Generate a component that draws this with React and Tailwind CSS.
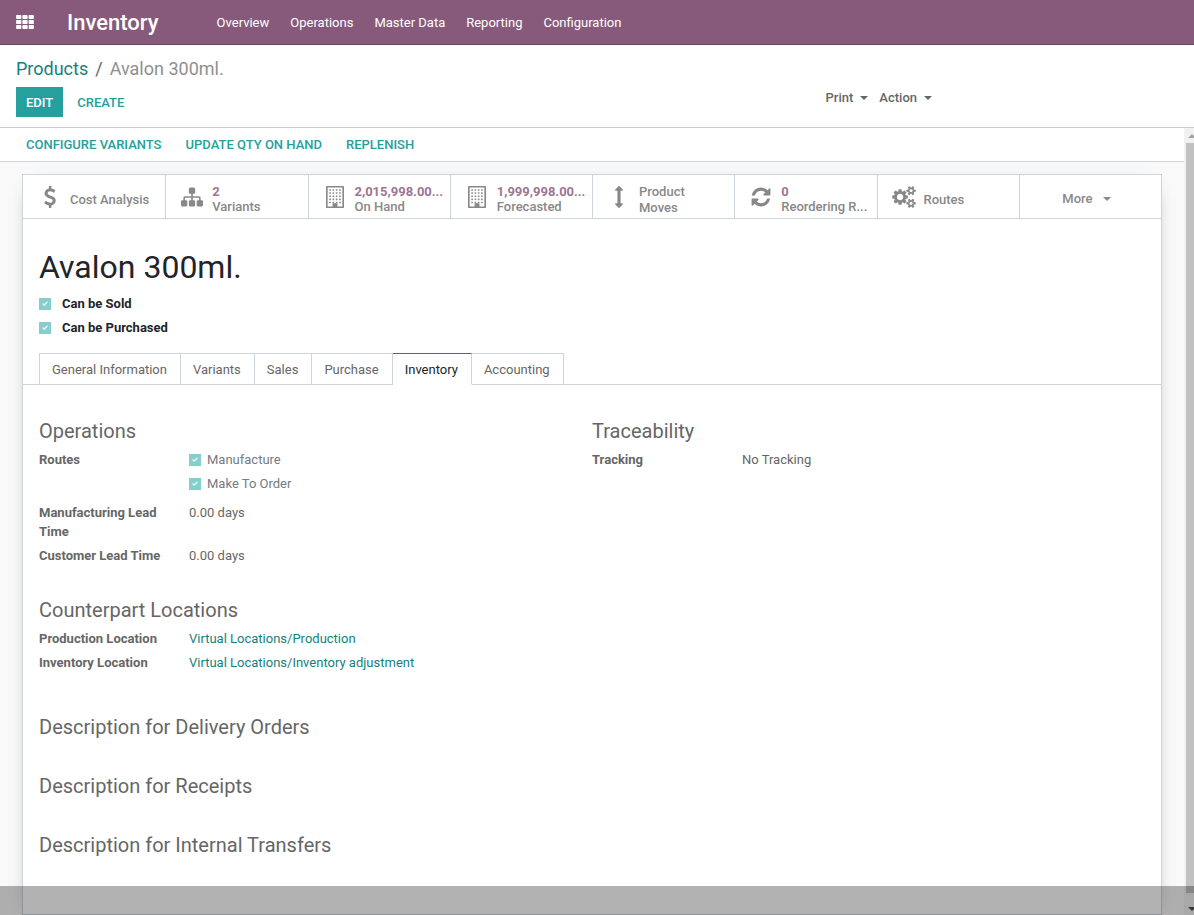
import React from "react";

const PATHS = {
  dollar:
    "M1362 1185q0 153-99.5 263.5t-258.5 136.5v175q0 14-9 23t-23 9h-135q-13 0-22.5-9.5t-9.5-22.5v-175q-66-9-127.5-31t-101.5-44.5-74-48-46.5-37.5-17.5-18q-17-21-2-41l103-135q7-10 23-12 15-2 24 9l2 2q113 99 243 125 37 8 74 8 81 0 142.5-43t61.5-122q0-28-15-53t-33.5-42-58.5-37.5-66-32-80-32.5q-39-16-61.5-25t-61.5-26.5-62.5-31-56.5-35.5-53.5-42.5-43.5-49-35.5-58-21-66.5-8.5-78q0-138 98-242t255-134v-180q0-13 9.5-22.5t22.5-9.5h135q14 0 23 9t9 23v176q57 6 110.5 23t87 33.5 63.5 37.5 39 29 15 14q17 18 5 38l-81 146q-8 15-23 16-14 3-27-7-3-3-14.5-12t-39-26.5-58.5-32-74.5-26-85.5-11.5q-95 0-155 43t-60 111q0 26 8.5 48t29.5 41.5 39.5 33 56 31 60.5 27 70 27.5q53 20 81 31.5t76 35 75.5 42.5 62 50 53 63.5 31.5 76.5 13 94z",
  sitemap:
    "M1792 1248v320q0 40-28 68t-68 28h-320q-40 0-68-28t-28-68v-320q0-40 28-68t68-28h96v-192h-512v192h96q40 0 68 28t28 68v320q0 40-28 68t-68 28h-320q-40 0-68-28t-28-68v-320q0-40 28-68t68-28h96v-192h-512v192h96q40 0 68 28t28 68v320q0 40-28 68t-68 28h-320q-40 0-68-28t-28-68v-320q0-40 28-68t68-28h96v-192q0-52 38-90t90-38h512v-192h-96q-40 0-68-28t-28-68v-320q0-40 28-68t68-28h320q40 0 68 28t28 68v320q0 40-28 68t-68 28h-96v192h512q52 0 90 38t38 90v192h96q40 0 68 28t28 68z",
  arrows:
    "M1216 320q0 26-19 45t-45 19h-128v1024h128q26 0 45 19t19 45-19 45l-256 256q-19 19-45 19t-45-19l-256-256q-19-19-19-45t19-45 45-19h128v-1024h-128q-26 0-45-19t-19-45 19-45l256-256q19-19 45-19t45 19l256 256q19 19 19 45z",
  refresh:
    "M1639 1056q0 5-1 7-64 268-268 434.5t-478 166.5q-146 0-282.5-55t-243.5-157l-129 129q-19 19-45 19t-45-19-19-45v-448q0-26 19-45t45-19h448q26 0 45 19t19 45-19 45l-137 137q71 66 161 102t187 36q134 0 250-65t186-179q11-17 53-117 8-23 30-23h192q13 0 22.5 9.5t9.5 22.5zm25-800v448q0 26-19 45t-45 19h-448q-26 0-45-19t-19-45 19-45l138-138q-148-137-349-137-134 0-250 65t-186 179q-11 17-53 117-8 23-30 23h-199q-13 0-22.5-9.5t-9.5-22.5v-7q65-268 270-434.5t480-166.5q146 0 284 55.5t245 156.5l130-129q19-19 45-19t45 19 19 45z",
  bigCog:
    "M832 896q0-106-75-181t-181-75-181 75-75 181 75 181 181 75 181-75 75-181zM1216 805v185q0 10-7 19.5t-16 10.5l-155 24q-11 35-32 76 34 48 90 115 7 11 7 20 0 12-7 19-23 30-82.5 89.5t-78.5 59.5q-11 0-21-7l-115-90q-37 19-77 31-11 108-23 155-7 24-30 24h-186q-11 0-20-7.5t-10-17.5l-23-153q-34-10-75-31l-118 89q-7 7-20 7-11 0-21-8-144-133-144-160 0-9 7-19 10-14 41-53t47-61q-23-44-35-82l-152-24q-10-1-17-9.5t-7-19.5v-185q0-10 7-19.5t16-10.5l155-24q11-35 32-76-34-48-90-115-7-11-7-20 0-12 7-20 22-30 82-89t79-59q11 0 21 7l115 90q34-18 77-32 11-108 23-154 7-24 30-24h186q11 0 20 7.5t10 17.5l23 153q34 10 75 31l118-89q8-7 20-7 11 0 21 8 144 133 144 160 0 8-7 19-12 16-42 54t-45 60q23 48 34 82l152 23q10 2 17 10.5t7 19.5z",
  smallCog:
    "M1600 1408q0-52-38-90t-90-38-90 38-38 90q0 53 37.5 90.5t90.5 37.5 90.5-37.5 37.5-90.5zM1856 1338v140q0 16-149 31-12 27-30 52 51 113 51 138 0 4-4 7-122 71-124 71-8 0-46-47t-52-68q-20 2-30 2t-30-2q-14 21-52 68t-46 47q-2 0-124-71-4-3-4-7 0-25 51-138-18-25-30-52-149-15-149-31v-140q0-16 149-31 13-29 30-52-51-113-51-138 0-4 4-7 4-2 35-20t59-34 30-16q8 0 46 46.5t52 67.5q20-2 30-2t30 2q51-71 92-112l6-2q4 0 124 70 4 3 4 7 0 25-51 138 17 23 30 52 149 15 149 31z",
};

function Glyph({ name }) {
  return (
    <svg viewBox="0 0 1792 1792" className="size-[22px] fill-current" aria-hidden="true">
      <path d={PATHS[name]} />
    </svg>
  );
}

function Cogs() {
  return (
    <svg viewBox="-64 0 1920 1792" className="h-[22px] w-6 fill-current" fillRule="evenodd" aria-hidden="true">
      <path d={PATHS.bigCog} />
      <path d={PATHS.smallCog} />
      <path d={PATHS.smallCog} transform="translate(0 -1024)" />
    </svg>
  );
}

function Building() {
  const cells = [];
  for (let r = 0; r < 5; r++) {
    for (let c = 0; c < 4; c++) {
      cells.push(<rect key={`${r}-${c}`} x={256 + c * 256} y={256 + r * 256} width="128" height="128" rx="24" />);
    }
  }
  return (
    <svg viewBox="0 0 1408 1792" className="h-[22px] w-[18px] fill-current" preserveAspectRatio="none" aria-hidden="true">
      <path
        fillRule="evenodd"
        d="M64 0h1280q26 0 45 19t19 45v1664q0 26-19 45t-45 19h-1280q-26 0-45-19t-19-45v-1664q0-26 19-45t45-19zM128 128v1536h384v-224q0-13 9.500-22.500t22.500-9.500h320q13 0 22.500 9.500t9.500 22.500v224h384v-1536z"
      />
      {cells}
    </svg>
  );
}

function AppsGrid() {
  const cells = [];
  for (let r = 0; r < 3; r++) {
    for (let c = 0; c < 3; c++) {
      cells.push(<rect key={`${r}-${c}`} x={c * 6.35} y={r * 5.1} width="5.3" height="4" rx="0.8" />);
    }
  }
  return (
    <svg viewBox="0 0 18 14.2" className="h-[14px] w-[18px] fill-current" aria-hidden="true">
      {cells}
    </svg>
  );
}

function Caret() {
  return (
    <svg viewBox="0 0 8 4" className="h-1 w-2 fill-current" aria-hidden="true">
      <path d="M0 0h8L4 4z" />
    </svg>
  );
}

function Check({ label, labelClass, gap }) {
  return (
    <label className={`flex items-center leading-[19px] ${gap}`}>
      <span className="grid size-3 place-items-center">
        <input
          type="checkbox"
          defaultChecked
          disabled
          className="col-start-1 row-start-1 size-3 appearance-none bg-[#85cecb]"
        />
        <svg viewBox="0 0 6 5" className="col-start-1 row-start-1 h-[5px] w-[6px]" aria-hidden="true">
          <path d="M0.500 2.500l1.700 1.600L5.500 0.800" fill="none" stroke="#e8f6f6" strokeWidth="1.400" />
        </svg>
      </span>
      <span className={labelClass}>{label}</span>
    </label>
  );
}

function Stat({ icon, children }) {
  return (
    <button
      type="button"
      className="flex min-w-0 items-center border-l border-[#ced4da] pr-2 text-left first:border-transparent"
    >
      <span className="flex w-[46px] shrink-0 justify-center pt-px pl-[6px]">{icon}</span>
      <span className="min-w-0 flex-1">{children}</span>
    </button>
  );
}

function StatValue({ value, label }) {
  return (
    <span className="block pt-1 leading-[15px] whitespace-nowrap">
      <span className="block font-bold text-[#9d7694]">{value}</span>
      <span className="block">{label}</span>
    </span>
  );
}

function Row({ label, children }) {
  return (
    <div className="flex leading-[19px]">
      <dt className="w-[150px] shrink-0 pr-6 font-bold">{label}</dt>
      <dd className="min-w-0 flex-1">{children}</dd>
    </div>
  );
}

const MENU = ["Overview", "Operations", "Master Data", "Reporting", "Configuration"];
const TABS = ["General Information", "Variants", "Sales", "Purchase", "Inventory", "Accounting"];
const NOTES = ["Description for Delivery Orders", "Description for Receipts", "Description for Internal Transfers"];
const heading = "text-[20px] leading-6";

export default function App() {
  return (
    <div className="flex min-h-screen flex-col bg-white font-['Roboto',sans-serif] text-[13px] text-[#666666]">
      <header className="flex h-[45px] items-center border-b border-[#68465f] bg-[#875a7b] px-4 text-white">
        <button type="button" aria-label="Applications" className="pb-px">
          <AppsGrid />
        </button>
        <a href="#inventory" className="ml-[33px] pt-[2px] text-[22px] leading-8 font-medium">
          Inventory
        </a>
        <nav className="ml-[58px] flex gap-[21px] pt-[2px]">
          {MENU.map((m) => (
            <a key={m} href="#menu">
              {m}
            </a>
          ))}
        </nav>
      </header>

      <section className="flex items-end justify-between border-b border-[#cccccc] px-4 pt-3 pb-[10px]">
        <div>
          <nav className="flex gap-[7px] text-[18px] leading-6" aria-label="Breadcrumb">
            <a href="#products" className="text-[#17807d]">
              Products
            </a>
            <span>/</span>
            <span className="text-[#8f8f8f]">Avalon 300ml.</span>
          </nav>
          <div className="mt-[6px] flex items-center gap-1 font-medium">
            <button type="button" className="h-[30px] bg-[#26a09d] px-[10px] pt-[2px] text-white">
              EDIT
            </button>
            <button type="button" className="h-[30px] px-[10px] pt-[2px] text-[#26a09d]">
              CREATE
            </button>
          </div>
        </div>
        <div className="mr-[246px] flex gap-[11px] pb-[9px] font-medium">
          <button type="button" className="flex items-center gap-[7px] leading-5">
            Print <Caret />
          </button>
          <button type="button" className="flex items-center gap-[7px] leading-5">
            Action <Caret />
          </button>
        </div>
      </section>

      <div className="flex flex-1">
        <main className="flex min-w-0 flex-1 flex-col bg-[#f9f9f9]">
          <div className="flex h-[34px] items-center gap-6 border-b border-[#ced4da] bg-white px-[26px] font-medium text-[#26a09d]">
            <button type="button">CONFIGURE VARIANTS</button>
            <button type="button">UPDATE QTY ON HAND</button>
            <button type="button">REPLENISH</button>
          </div>

          <div className="mx-[22px] mt-3 flex-1 border border-[#ced4da] bg-white pb-14 shadow-[0_5px_20px_-15px_black]">
            <div className="grid h-11 grid-cols-8 border-b border-[#ced4da] font-medium text-[#888888]">
              <Stat icon={<Glyph name="dollar" />}>
                <span className="block pt-[6px]">Cost Analysis</span>
              </Stat>
              <Stat icon={<Glyph name="sitemap" />}>
                <StatValue value="2" label="Variants" />
              </Stat>
              <Stat icon={<Building />}>
                <StatValue value="2,015,998.00..." label="On Hand" />
              </Stat>
              <Stat icon={<Building />}>
                <StatValue value="1,999,998.00..." label="Forecasted" />
              </Stat>
              <Stat icon={<Glyph name="arrows" />}>
                <span className="block w-14 pt-[6px] leading-4">Product Moves</span>
              </Stat>
              <Stat icon={<Glyph name="refresh" />}>
                <StatValue value="0" label="Reordering R..." />
              </Stat>
              <Stat icon={<Cogs />}>
                <span className="block pt-[6px]">Routes</span>
              </Stat>
              <button
                type="button"
                className="flex items-center justify-center gap-[11px] border-l border-[#ced4da] pt-1 pr-[7px]"
              >
                More <Caret />
              </button>
            </div>

            <div className="px-4 pt-7">
              <h1 className="text-[32px] leading-10 text-[#212529]">Avalon 300ml.</h1>
              <div className="mt-[7px] flex flex-col gap-[5px] text-[#212529]">
                <Check label="Can be Sold" gap="gap-[11px]" labelClass="font-bold" />
                <Check label="Can be Purchased" gap="gap-[11px]" labelClass="font-bold" />
              </div>
            </div>

            <div role="tablist" className="mt-4 flex border-b border-[#ced4da] pl-4">
              {TABS.map((t, i) => {
                const active = t === "Inventory";
                return (
                  <button
                    key={t}
                    type="button"
                    role="tab"
                    aria-selected={active}
                    className={`-mb-px h-8 border-y border-r pt-[2px] pr-[13px] pl-3 ${i === 0 ? "border-l" : ""} ${
                      active
                        ? "border-t-[#7c5576] border-r-[#ced4da] border-b-white text-[#212529]"
                        : "border-[#ced4da]"
                    }`}
                  >
                    {t}
                  </button>
                );
              })}
            </div>

            <div className="px-4 pt-[34px]">
              <div className="grid grid-cols-2">
                <section>
                  <h2 className={heading}>Operations</h2>
                  <dl className="mt-[7px] flex flex-col gap-[5px]">
                    <Row label="Routes">
                      <div className="flex flex-col gap-[5px] pb-[5px] text-[#777b80]">
                        <Check label="Manufacture" gap="gap-[6px]" labelClass="" />
                        <Check label="Make To Order" gap="gap-[6px]" labelClass="" />
                      </div>
                    </Row>
                    <Row label="Manufacturing Lead Time">0.00 days</Row>
                    <Row label="Customer Lead Time">0.00 days</Row>
                  </dl>
                </section>
                <section>
                  <h2 className={heading}>Traceability</h2>
                  <dl className="mt-[7px]">
                    <Row label="Tracking">No Tracking</Row>
                  </dl>
                </section>
              </div>

              <section className="mt-[33px]">
                <h2 className={heading}>Counterpart Locations</h2>
                <dl className="mt-[7px] flex flex-col gap-[5px]">
                  <Row label="Production Location">
                    <a href="#production" className="text-[#17807d]">
                      Virtual Locations/Production
                    </a>
                  </Row>
                  <Row label="Inventory Location">
                    <a href="#adjustment" className="text-[#17807d]">
                      Virtual Locations/Inventory adjustment
                    </a>
                  </Row>
                </dl>
              </section>

              <div className="mt-[43px] flex flex-col gap-[35px]">
                {NOTES.map((n) => (
                  <h2 key={n} className={heading}>
                    {n}
                  </h2>
                ))}
              </div>
            </div>
          </div>
        </main>

        <div className="flex w-[10px] flex-col overflow-hidden bg-[#f1f1f1] pl-[2px]" aria-hidden="true">
          <svg viewBox="0 0 8 15" className="h-[15px] w-2">
            <path d="M2 10l4-4 4 4z" fill="#a3a3a3" />
          </svg>
          <div className="flex-1 bg-[#c1c1c1]" />
          <svg viewBox="0 0 8 22" className="h-[22px] w-2">
            <path d="M2 14h8l-4 4z" fill="#505050" />
          </svg>
        </div>
      </div>

      <div className="pointer-events-none fixed inset-x-0 bottom-0 h-[29px] bg-black/30" />
    </div>
  );
}
